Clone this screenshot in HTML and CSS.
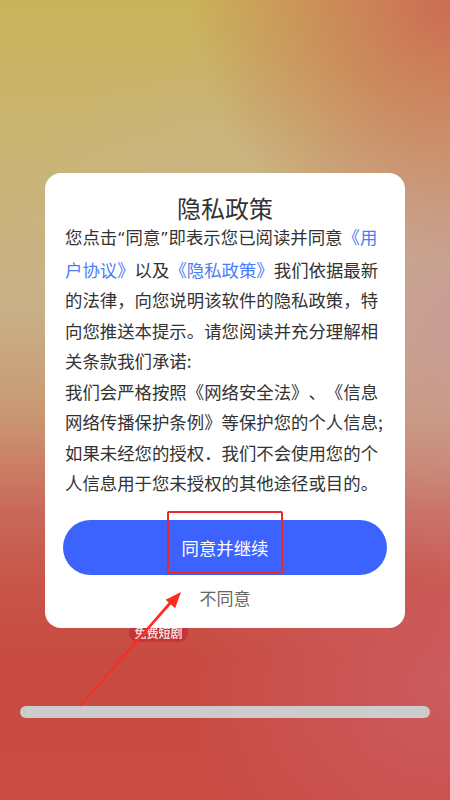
FILE: index.html
```html
<!DOCTYPE html>
<html lang="zh-CN">
<head>
<meta charset="utf-8">
<title>隐私政策</title>
<link rel="stylesheet" href="styles.css">
</head>
<body>
<div class="screen">
  <div class="badge">免费短剧</div>
  <div class="card">
    <h1 class="title">隐私政策</h1>
    <p class="body">
      <span class="line">您点击<span class="q">“</span>同意<span class="q">”</span>即表示您已阅读并同意<a class="link">《用</a></span>
      <span class="line"><a class="link">户协议》</a>以及<a class="link">《隐私政策》</a>我们依据最新</span>
      <span class="line">的法律，向您说明该软件的隐私政策，特</span>
      <span class="line">向您推送本提示。请您阅读并充分理解相</span>
      <span class="line">关条款我们承诺:</span>
      <span class="line">我们会严格按照《网络安全法》、《信息</span>
      <span class="line">网络传播保护条例》等保护您的个人信息;</span>
      <span class="line">如果未经您的授权．我们不会使用您的个</span>
      <span class="line">人信息用于您未授权的其他途径或目的。</span>
    </p>
    <button class="agree">同意并继续</button>
    <div class="decline">不同意</div>
  </div>
  <div class="home-bar"></div>
  <div class="highlight"></div>
  <svg class="arrow" width="450" height="800" viewBox="0 0 450 800">
    <polygon points="79.6,705.6 80.4,706.4 172.6,602.5 170.4,600.5" fill="#ff2b20"/>
    <polygon points="181,592 175.2,608.2 165.6,599.8" fill="#ff2b20"/>
  </svg>
</div>
</body>
</html>
```

FILE: styles.css
```css
* { box-sizing: border-box; }
html, body { margin: 0; padding: 0; }
body {
  width: 450px;
  height: 800px;
  overflow: hidden;
  font-family: "Noto Sans CJK SC", "Noto Sans", sans-serif;
}
.screen {
  position: relative;
  width: 450px;
  height: 800px;
  padding-top: 173px;
  background:
    radial-gradient(ellipse 260px 260px at 100% 0%, rgba(205, 104, 84, 0.95) 0%, rgba(205, 110, 88, 0) 100%),
    radial-gradient(ellipse 200px 260px at 100% 40%, rgba(201, 156, 150, 0.95) 0%, rgba(201, 156, 150, 0) 100%),
    radial-gradient(ellipse 260px 220px at 100% 85%, rgba(205, 96, 102, 0.8) 0%, rgba(205, 96, 102, 0) 100%),
    radial-gradient(ellipse 220px 180px at 50% 28%, rgba(203, 180, 140, 0.7) 0%, rgba(203, 180, 140, 0) 100%),
    linear-gradient(180deg, #c9b35a 0%, #c9b472 18%, #c8b188 38%, #c99a74 51%, #cb7f66 58%, #c9685a 64%, #c85548 73%, #c84b42 82%, #c94c45 100%);
}
.card {
  width: 360px;
  margin: 0 0 0 45px;
  background: #fff;
  border-radius: 16px;
  padding: 21px 18px 18px;
  display: flex;
  flex-direction: column;
  position: relative;
  z-index: 2;
}
.title {
  margin: 0;
  font-size: 24px;
  line-height: 28px;
  font-weight: 400;
  color: #333;
  text-align: center;
}
.body {
  margin: 0;
  padding: 0 2px;
  font-size: 17.4px;
  line-height: 30.5px;
  color: #333;
  text-spacing-trim: space-all;
}
.line {
  display: block;
  white-space: nowrap;
}
.q {
  font-family: "DejaVu Sans", sans-serif;
  font-size: 16px;
}
.link { color: #4c7cf6; }
.agree {
  margin-top: 21px;
  height: 55px;
  border: none;
  border-radius: 28px;
  background: #3d63fe;
  color: #fff;
  font-family: "Noto Sans CJK SC", "Noto Sans", sans-serif;
  font-size: 17.4px;
  padding: 0;
}
.decline {
  margin-top: 11px;
  font-size: 17px;
  line-height: 24px;
  color: #666;
  text-align: center;
}
.badge {
  position: absolute;
  left: 129px;
  top: 623px;
  width: 59px;
  height: 19px;
  border-radius: 9px;
  background: #c23637;
  color: rgba(255, 255, 255, 0.8);
  font-size: 12px;
  font-weight: 700;
  line-height: 19px;
  text-align: center;
  filter: blur(0.5px);
  z-index: 1;
}
.home-bar {
  margin: 78px 20px 0;
  height: 12px;
  border-radius: 6px;
  background: #cccccc;
}
.highlight {
  position: absolute;
  left: 167px;
  top: 511px;
  width: 116px;
  height: 63px;
  border: 2px solid #e8282a;
  border-radius: 2px;
  z-index: 3;
}
.arrow {
  position: absolute;
  left: 0;
  top: 0;
  z-index: 4;
  pointer-events: none;
}
```
